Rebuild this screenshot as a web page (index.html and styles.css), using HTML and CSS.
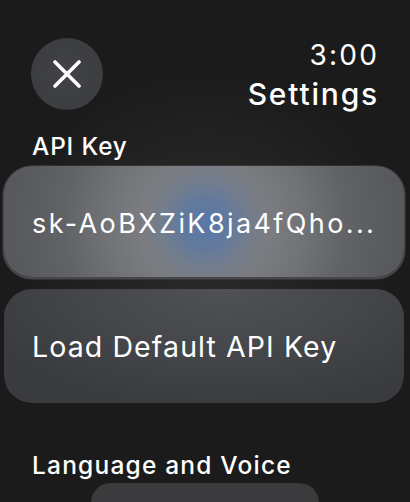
FILE: index.html
```html
<!DOCTYPE html>
<html>
<head>
<meta charset="utf-8">
<link rel="stylesheet" href="styles.css">
</head>
<body>
<div class="screen">
  <div class="glow"></div>
  <header class="header">
    <button class="close" aria-label="Close">
      <svg width="28" height="28" viewBox="0 0 28 28"><path d="M2 2 L26 26 M26 2 L2 26" stroke="#fff" stroke-width="3.6" stroke-linecap="round"/></svg>
    </button>
    <div class="title">
      <div class="time">3:00</div>
      <div class="heading">Settings</div>
    </div>
  </header>
  <div class="section-label api">API Key</div>
  <div class="card card-key"><span>sk-AoBXZiK8ja4fQho...</span></div>
  <div class="card card-load"><span>Load Default API Key</span></div>
  <div class="section-label lang">Language and Voice</div>
  <div class="card-small"></div>
</div>
</body>
</html>
```
FILE: styles.css
```css
html, body {
  margin: 0;
  padding: 0;
  background: #1b1b1b;
  width: 410px;
  height: 502px;
  overflow: hidden;
}
.screen {
  position: relative;
  width: 410px;
  height: 502px;
  font-family: Inter, "Noto Sans", sans-serif;
  color: #fff;
  display: flex;
  flex-direction: column;
}
.screen > * {
  flex-shrink: 0;
}
.glow {
  position: absolute;
  left: 0;
  top: 0;
  width: 410px;
  height: 502px;
  background: radial-gradient(ellipse 190px 170px at 205px 240px, rgba(255,255,255,0.08), rgba(255,255,255,0) 100%);
  pointer-events: none;
}
.header {
  position: relative;
  display: flex;
  justify-content: space-between;
  align-items: flex-start;
  padding: 38px 33px 0 31px;
}
.close {
  width: 72px;
  height: 72px;
  border-radius: 50%;
  border: none;
  background: radial-gradient(circle at 50% 50%, #424346 0, #3a3b3e 100%);
  display: flex;
  align-items: center;
  justify-content: center;
  padding: 0;
}
.title {
  text-align: right;
}
.time {
  font-size: 28px;
  line-height: 34px;
  font-weight: 400;
  letter-spacing: 2.2px;
  margin-right: -2px;
}
.heading {
  margin-top: 4px;
  font-size: 30px;
  line-height: 36px;
  font-weight: 500;
  letter-spacing: 1.8px;
  margin-right: -2px;
}
.section-label {
  position: relative;
  padding-left: 32px;
  line-height: 28px;
  font-weight: 500;
}
.api {
  margin-top: 20px;
  font-size: 24.3px;
  letter-spacing: 0.9px;
}
.card {
  position: relative;
  margin: 0 6px 0 4px;
  border-radius: 28px;
  display: flex;
  align-items: center;
  padding-left: 28px;
  white-space: nowrap;
}
.card-key {
  margin-top: 6px;
  height: 111px;
  font-size: 27px;
  letter-spacing: 2.4px;
  background: radial-gradient(circle 190px at 201px 58px, #5878a8 0, #60799e 22px, #727d8e 42px, #7b7d82 62px, #717276 100px, #626366 140px, #58595c 190px);
  box-shadow: 0 1px 0 1.5px #46474a;
}
.card-key span { padding-top: 4px; }
.card-load {
  margin-top: 12px;
  height: 114px;
  font-size: 28.5px;
  letter-spacing: 1.1px;
  background: radial-gradient(ellipse 260px 120px at 55% 0%, #505154 0, #46474a 50%, #3a3b3e 100%);
}
.lang {
  margin-top: 48px;
  font-size: 24.5px;
  letter-spacing: 1.2px;
}
.card-small {
  position: relative;
  margin: 4px 0 0 91px;
  width: 228px;
  height: 40px;
  border-radius: 22px;
  background: #3b3b3d;
}
```
